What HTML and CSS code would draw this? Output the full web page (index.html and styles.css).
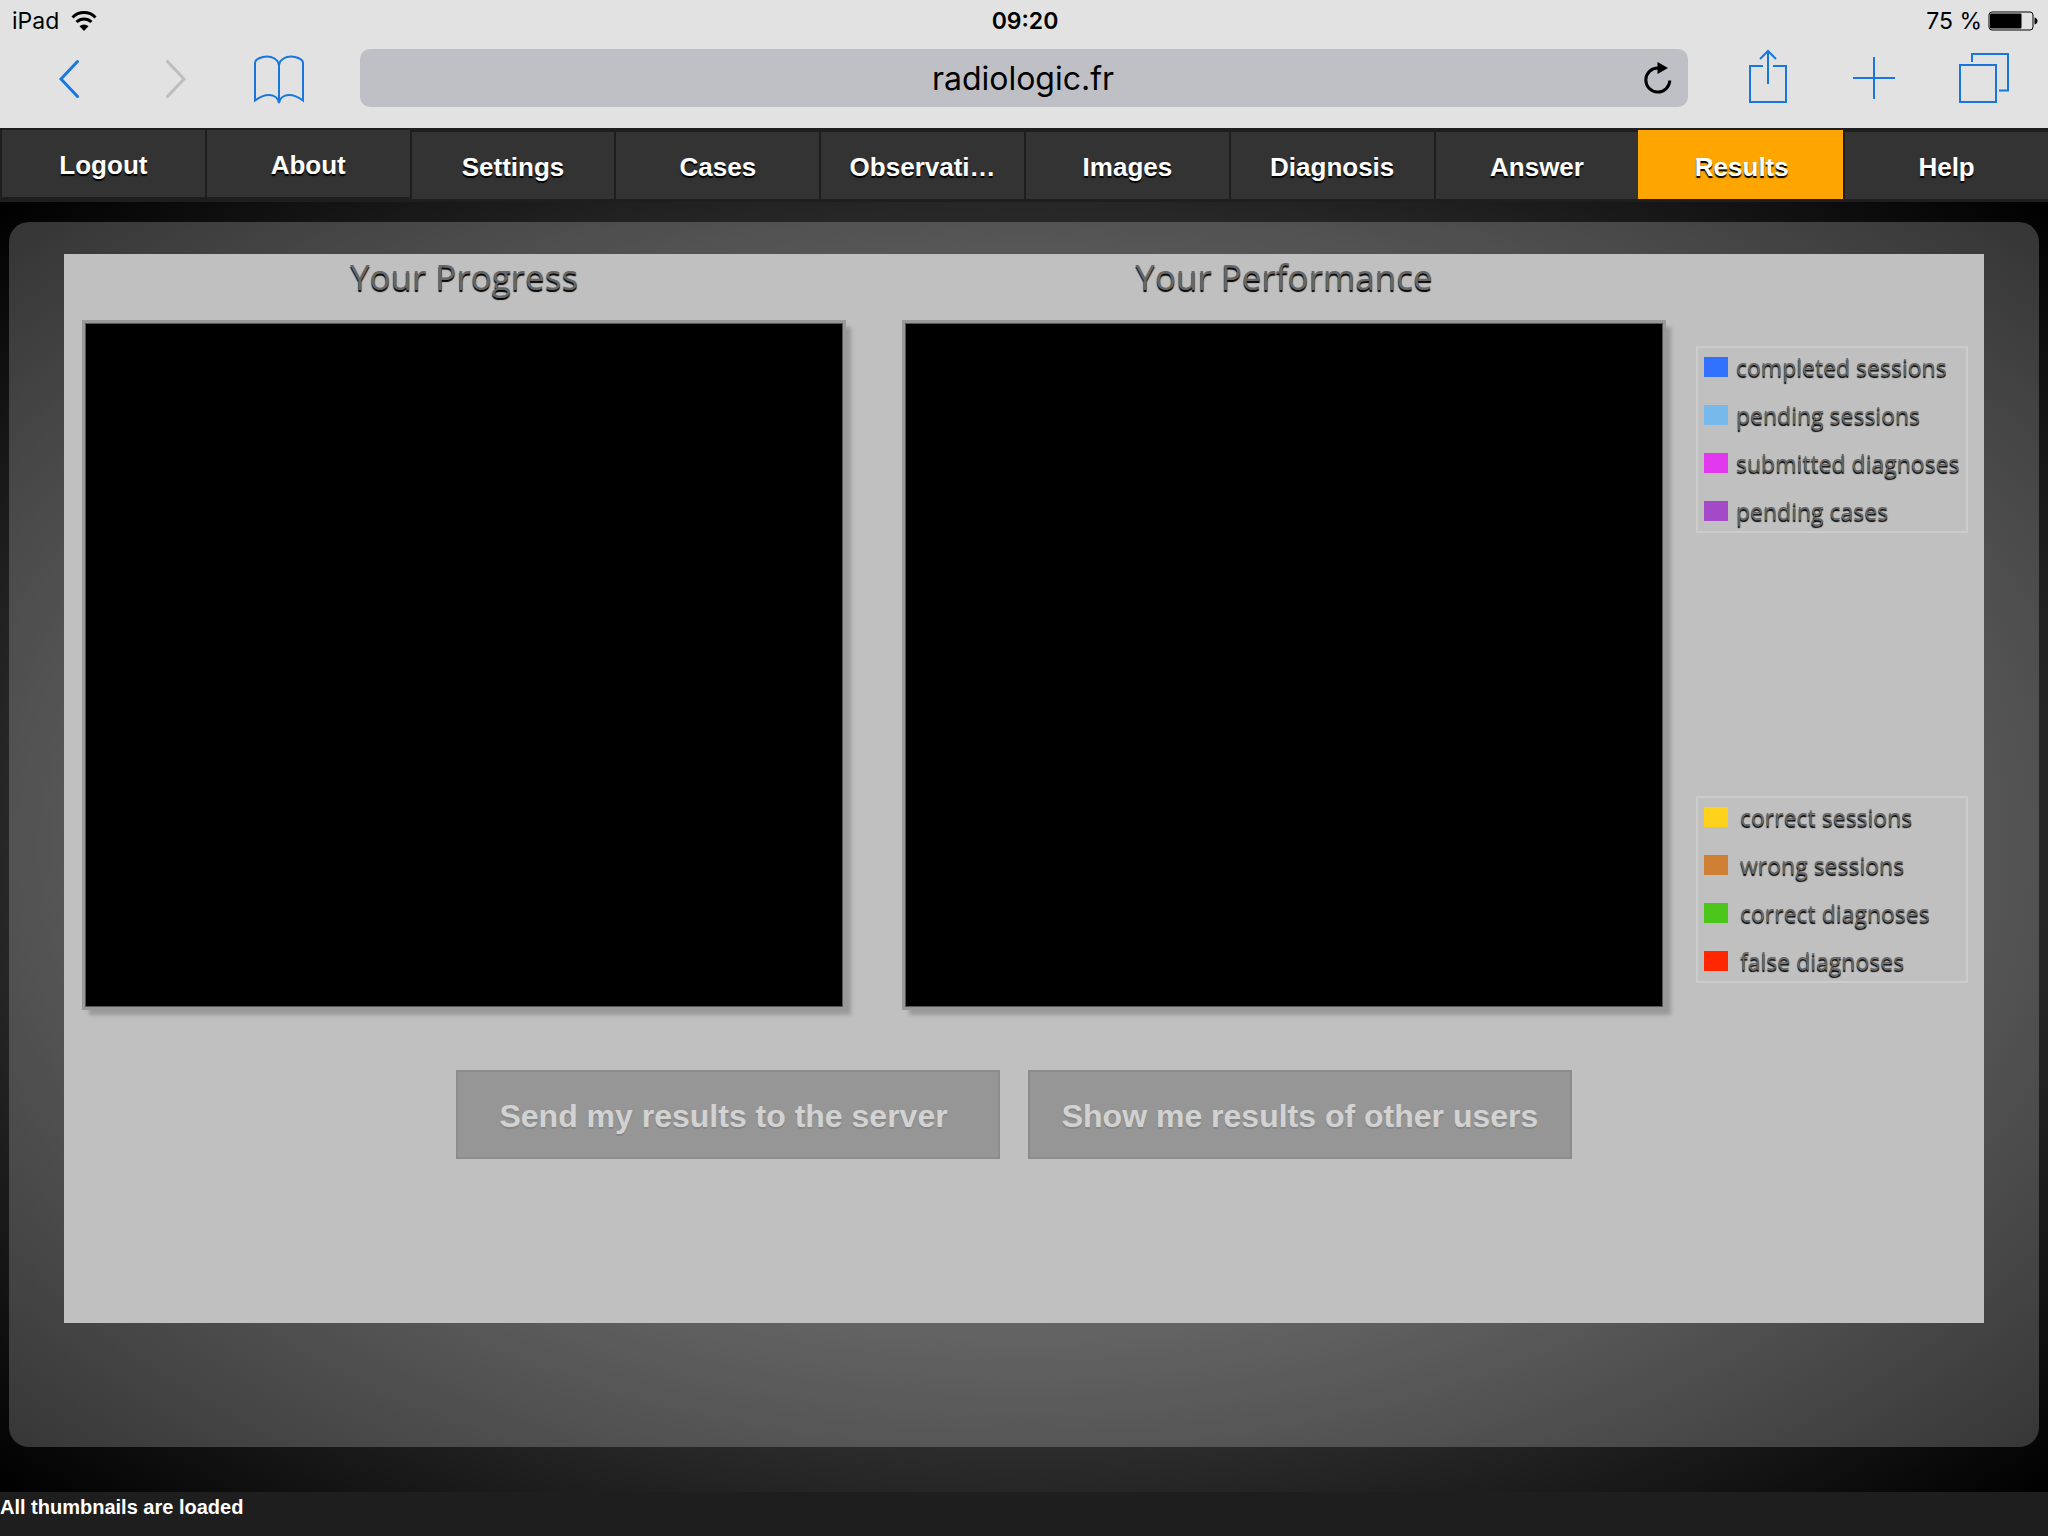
FILE: index.html
```
<!DOCTYPE html>
<html lang="en">
<head>
<meta charset="utf-8">
<title>Results</title>
<link rel="stylesheet" href="styles.css">
</head>
<body>
<header class="browser">
  <div class="status">
    <div class="status-left">
      <span>iPad</span>
      <svg width="26" height="20" viewBox="0 0 26 20" aria-hidden="true">
        <path d="M1.500 6.500A16 16 0 0 1 24.500 6.500M5.500 11A11 11 0 0 1 20.500 11" fill="none" stroke="#000" stroke-width="3"/>
        <path d="M13 20l-4.500-4.800a6.500 6.500 0 0 1 9 0z"/>
      </svg>
    </div>
    <span class="clock">09:20</span>
    <div class="status-right">
      <span>75 %</span>
      <svg width="50" height="20" viewBox="0 0 50 20" aria-hidden="true">
        <rect x="1" y="1" width="44" height="18" rx="3" fill="none" stroke="#000" stroke-width="1"/>
        <rect x="2" y="2.500" width="31.500" height="15" rx="1"/>
        <path d="M46.500 6.500q3 1 3 3.500t-3 3.500z"/>
      </svg>
    </div>
  </div>
  <div class="toolbar">
    <div class="tools tools-left">
      <button class="tool" type="button" aria-label="Back"><svg width="20" height="40" viewBox="0 -2 20 40"><path d="M18.500 1.500L2 19l16.500 17.500"/></svg></button>
      <button class="tool forward" type="button" aria-label="Forward" disabled><svg width="20" height="40" viewBox="0 -2 20 40"><path d="M1.500 1.500L18 19L1.500 36.500"/></svg></button>
      <button class="tool" type="button" aria-label="Bookmarks"><svg class="thin" width="52" height="54" viewBox="0 -4 52 54"><path d="M26 48V10C25 4 19 1.500 14 1.500S2 4 2 8V45.500C8 41 12 40 16 40S25 42 26 48C27 42 32 40 36 40S44 41 50 45.500V8C50 4 43 1.500 38 1.500S27 4 26 10"/></svg></button>
    </div>
    <div class="address">
      <input class="address-field" type="text" aria-label="Address" value="radiologic.fr">
      <button class="reload" type="button" aria-label="Reload"><svg width="28" height="32" viewBox="0 0 28 32"><path d="M14 6A12 12 0 1 0 25.800 18.500" fill="none" stroke="#000" stroke-width="3"/><path d="M13.500 0L24 6L13.500 12z"/></svg></button>
    </div>
    <div class="tools tools-right">
      <button class="tool" type="button" aria-label="Share"><svg class="thin" width="40" height="58" viewBox="0 1 40 58"><path d="M15 18H2V54H38V18H25M20 36V3M12 11L20 3L28 11"/></svg></button>
      <button class="tool" type="button" aria-label="New tab"><svg class="thin" width="42" height="42" viewBox="0 0 42 42"><path d="M21 0V42M0 21H42"/></svg></button>
      <button class="tool" type="button" aria-label="Show tabs"><svg class="thin" width="50" height="50" viewBox="0 0 50 50"><path d="M1 12H37V49H1zM13 9V1H49V37.500H40"/></svg></button>
    </div>
  </div>
</header>
<nav class="nav">
  <a class="nav-item raised" href="#logout">Logout</a>
  <a class="nav-item raised" href="#about">About</a>
  <a class="nav-item" href="#settings">Settings</a>
  <a class="nav-item" href="#cases">Cases</a>
  <a class="nav-item" href="#observation">Observati…</a>
  <a class="nav-item" href="#images">Images</a>
  <a class="nav-item" href="#diagnosis">Diagnosis</a>
  <a class="nav-item" href="#answer">Answer</a>
  <a class="nav-item active" href="#results" aria-current="page">Results</a>
  <a class="nav-item" href="#help">Help</a>
</nav>
<main class="stage">
  <div class="panel">
    <div class="results">
      <div class="overview">
        <div class="charts">
          <section class="chart">
            <h2 class="chart-title">Your Progress</h2>
            <div class="canvas"></div>
          </section>
          <section class="chart">
            <h2 class="chart-title">Your Performance</h2>
            <div class="canvas"></div>
          </section>
        </div>
        <aside class="legends">
          <ul class="legend">
            <li><i class="swatch blue"></i>completed sessions</li>
            <li><i class="swatch sky"></i>pending sessions</li>
            <li><i class="swatch pink"></i>submitted diagnoses</li>
            <li><i class="swatch purple"></i>pending cases</li>
          </ul>
          <ul class="legend wide">
            <li><i class="swatch yellow"></i>correct sessions</li>
            <li><i class="swatch brown"></i>wrong sessions</li>
            <li><i class="swatch green"></i>correct diagnoses</li>
            <li><i class="swatch red"></i>false diagnoses</li>
          </ul>
        </aside>
      </div>
      <div class="actions">
        <button class="action" type="button" disabled>Send my results to the server&nbsp;</button>
        <button class="action" type="button" disabled>Show me results of other users</button>
      </div>
    </div>
  </div>
</main>
<footer class="footer">All thumbnails are loaded</footer>
</body>
</html>
```
FILE: styles.css
```
* { box-sizing: border-box; }
body {
  margin: 0;
  min-height: 100vh;
  display: flex;
  flex-direction: column;
  background: #000;
  color: #fff;
  font-family: "Liberation Sans", Arial, sans-serif;
}
button { font: inherit; border: 0; padding: 0; background: none; }
svg { display: block; }

/* Browser chrome */
.browser {
  height: 128px;
  background: #e2e2e2;
  color: #000;
  font-family: Inter, Roboto, sans-serif;
}
.status {
  display: grid;
  grid-template-columns: 1fr auto 1fr;
  align-items: center;
  height: 42px;
  padding: 0 10px 0 12px;
  font-size: 23px;
}
.status-left, .status-right { display: flex; align-items: center; gap: 12px; }
.status-right { justify-content: flex-end; gap: 6px; }
.clock { font-weight: 600; }
.toolbar {
  display: grid;
  grid-template-columns: 330px 1fr 330px;
  column-gap: 30px;
  align-items: center;
  height: 72px;
}
.tools { display: flex; align-items: center; }
.tools-left { padding-left: 59px; gap: 87px; }
.tools-left .tool:last-child { margin-left: -20px; }
.tools-right { justify-content: space-between; padding: 0 39px 0 30px; }
.tool svg { fill: none; stroke: #1777de; stroke-width: 3; stroke-linecap: round; }
.tool.forward svg { stroke: #bdbdbd; }
.tool .thin { stroke-width: 2; stroke-linecap: butt; }
.address {
  display: flex;
  align-items: center;
  height: 58px;
  padding: 0 16px 0 42px;
  border-radius: 10px;
  background: #bfc0c5;
}
.address-field {
  flex: 1;
  min-width: 0;
  border: 0;
  padding: 0;
  background: none;
  color: #000;
  font: 32px Inter, Roboto, sans-serif;
  text-align: center;
}

/* Main navigation */
.nav {
  display: flex;
  height: 74px;
  padding: 2px 0 3px;
  background: #1e1e1e;
}
.nav-item {
  flex: 1 1 0;
  min-width: 0;
  margin-top: 2px;
  border-right: 2px solid #1e1e1e;
  background: #333;
  color: #fff;
  font-size: 26px;
  line-height: 70px;
  font-weight: bold;
  text-align: center;
  text-decoration: none;
  text-shadow: 0 2px 1px #000;
}
.nav-item.raised { margin: 0 0 2px; }
.nav-item:first-child { border-left: 2px solid #1e1e1e; }
.nav-item.active {
  margin-top: 0;
  line-height: 74px;
  background: #ffa500;
  box-shadow: -2px 0 0 #ffa500;
}
.nav-item:last-child { border-right: 0; }

/* Results */
.stage {
  flex: 1;
  padding: 20px 9px 45px;
  background: radial-gradient(ellipse farthest-corner, #828282 0%, #000 100%);
}
.panel {
  padding: 32px 55px 124px;
  border-radius: 20px;
  background: rgba(255, 255, 255, 0.2);
}
.results { padding-bottom: 164px; background: #c0c0c0; }
.overview { display: flex; gap: 32px; padding: 0 16px 0 20px; }
.charts {
  flex: 1;
  display: grid;
  grid-template-columns: 1fr 1fr;
  column-gap: 60px;
}
.chart-title {
  margin: 0 0 23px;
  color: #666;
  font: 35px/46px "Open Sans", sans-serif;
  text-align: center;
  text-shadow: 0 2px 1px #000;
}
.canvas {
  margin: 0 1px;
  aspect-ratio: 758 / 684;
  border: 1px solid #555;
  background: #000;
  box-shadow: 0 0 0 3px #999, 6px 6px 4px 2px #999;
}
.legends { width: 272px; padding-top: 92px; }
.legend {
  display: grid;
  row-gap: 10px;
  margin: 0;
  padding: 0 6px 1px;
  border: 2px solid #ccc;
  list-style: none;
  color: #666;
  font: 23px/38px "Open Sans", sans-serif;
  text-shadow: 0 2px 1px #000;
  white-space: nowrap;
}
.legend li { display: flex; align-items: center; gap: 8px; }
.legend.wide { margin-top: 263px; }
.legend.wide li { gap: 12px; }
.swatch { flex: none; width: 24px; height: 20px; }
.blue { background: #3270ff; }
.sky { background: #78b9ec; }
.pink { background: #e238ee; }
.purple { background: #a44ac8; }
.yellow { background: #ffd21c; }
.brown { background: #cf8035; }
.green { background: #4cc51a; }
.red { background: #ff2600; }

.actions {
  display: flex;
  justify-content: center;
  gap: 28px;
  padding: 63px 20px 0 0;
}
.action {
  width: 544px;
  height: 89px;
  padding-top: 4px;
  border: 2px solid #8c8c8c;
  background: #969696;
  color: #d2d2d2;
  font-size: 32px;
  font-weight: bold;
  text-shadow: 0 2px 1px #868686;
}
.footer {
  height: 44px;
  background: #1e1e1e;
  font-size: 20px;
  line-height: 30px;
  font-weight: bold;
}
```
